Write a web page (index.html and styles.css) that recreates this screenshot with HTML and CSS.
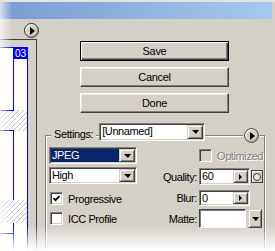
FILE: index.html
```html
<!DOCTYPE html>
<html lang="en">
<head>
    <meta charset="UTF-8">
    <title>Save For Web</title>
    <link rel="stylesheet" href="styles.css">
</head>
<body>

<div class="window">
    <div class="titlebar"></div>

    <div class="body">
        <!-- PREVIEW -->
        <div class="left">
            <div class="left-head"><span class="menu-btn"></span></div>
            <div class="preview">
                <div class="canvas">
                    <div class="band band-a">
                        <div class="cell-l"></div>
                        <div class="cell-r"><span class="slice-num">03</span></div>
                    </div>
                    <div class="band band-b hatch"><div class="cell-h"></div></div>
                    <div class="band band-c"><div class="cell-l"></div></div>
                    <div class="band band-d hatch"></div>
                    <div class="band band-e"><div class="cell-l"></div></div>
                    <div class="band band-f"><div class="cell-l cell-top"></div></div>
                </div>
            </div>
        </div>

        <!-- SETTINGS -->
        <div class="right">
            <div class="buttons">
                <button class="btn btn-default">Save</button>
                <button class="btn">Cancel</button>
                <button class="btn">Done</button>
            </div>

            <div class="group">
                <div class="group-head">
                    <span class="group-label">Settings:</span>
                    <div class="combo combo-settings">
                        <span class="combo-text">[Unnamed]</span>
                        <span class="arrow-btn"><i class="tri-down"></i></span>
                    </div>
                    <span class="menu-btn menu-right"></span>
                </div>

                <div class="group-body">
                    <div class="col-left">
                        <div class="combo combo-small">
                            <span class="combo-text selected">JPEG</span>
                            <span class="arrow-btn"><i class="tri-down"></i></span>
                        </div>
                        <div class="combo combo-small combo-next">
                            <span class="combo-text">High</span>
                            <span class="arrow-btn"><i class="tri-down"></i></span>
                        </div>
                        <label class="check-row check-first">
                            <span class="check">
                                <svg width="7" height="7" viewBox="0 0 7 7"><polyline points="0.5,3 2.5,5.2 6.5,1" fill="none" stroke="#000" stroke-width="1.7"/></svg>
                            </span>
                            Progressive
                        </label>
                        <label class="check-row check-second">
                            <span class="check"></span>
                            ICC Profile
                        </label>
                    </div>

                    <div class="col-right">
                        <div class="row row-opt">
                            <span></span>
                            <label class="check-row disabled">
                                <span class="check"></span>
                                Optimized
                            </label>
                        </div>
                        <div class="row row-quality">
                            <span class="row-label">Quality:</span>
                            <div class="row-field">
                                <div class="num-field">
                                    <span class="num-text">60</span>
                                    <span class="arrow-btn"><i class="tri-right"></i></span>
                                </div>
                                <span class="opt-btn"><i></i></span>
                            </div>
                        </div>
                        <div class="row row-blur">
                            <span class="row-label">Blur:</span>
                            <div class="row-field">
                                <div class="num-field">
                                    <span class="num-text">0</span>
                                    <span class="arrow-btn"><i class="tri-right"></i></span>
                                </div>
                            </div>
                        </div>
                        <div class="row row-matte">
                            <span class="row-label">Matte:</span>
                            <div class="row-field">
                                <div class="matte-box"></div>
                                <span class="arrow-btn matte-btn"><i class="tri-down"></i></span>
                            </div>
                        </div>
                    </div>
                </div>
            </div>
        </div>
    </div>

    <div class="fade"></div>
</div>

</body>
</html>
```

FILE: styles.css
```css
body {
    margin: 0;
    background: #fff;
    font-family: "Liberation Sans", Arial, sans-serif;
    font-size: 11px;
    letter-spacing: -0.4px;
    color: #000;
}
.window {
    position: relative;
    width: 275px;
    height: 251px;
    overflow: hidden;
    background: #d4d0c8;
    border-top: 2px solid #e6e4df;
    box-sizing: border-box;
}
.titlebar {
    height: 17px;
    margin-right: 3px;
    background: linear-gradient(to right, #7a9bcf, #a6c9ef);
}
.body {
    display: flex;
    height: 232px;
}

/* preview strip */
.left {
    width: 37px;
    display: flex;
    flex-direction: column;
}
.left-head {
    height: 20px;
    padding-top: 4px;
    box-sizing: border-box;
    display: flex;
    justify-content: flex-end;
}
.left-head .menu-btn {
    margin-right: -2px;
}
.preview {
    flex: 1;
    border-top: 1px solid #404040;
    border-right: 1px solid #404040;
    padding: 7px 8px 0 0;
}
.canvas {
    height: 100%;
    background: #fff;
    border-top: 1px solid #0000f0;
    border-right: 1px solid #0000f0;
    display: flex;
    flex-direction: column;
}
.band {
    display: flex;
    box-sizing: border-box;
}
.band-a { height: 62px; }
.band-b { height: 21px; }
.band-c { height: 69px; }
.band-d { height: 23px; }
.band-e { height: 10px; }
.band-f { flex: 1; }
.cell-l {
    width: 13px;
    border-right: 1px solid #0000f0;
}
.cell-top {
    border-top: 1px solid #0000f0;
}
.cell-h {
    width: 14px;
    border-top: 1px solid #0000f0;
    border-bottom: 1px solid #0000f0;
    box-sizing: border-box;
}
.cell-r {
    flex: 1;
}
.slice-num {
    display: block;
    height: 11px;
    background: #0000f0;
    color: #fff;
    font-size: 10px;
    line-height: 11px;
    letter-spacing: 0;
    text-align: right;
    padding-right: 1px;
}
.hatch {
    background: repeating-linear-gradient(135deg, #fff 0 2.5px, #c4c4c4 2.5px 3.5px);
}

/* round flyout buttons */
.menu-btn {
    width: 15px;
    height: 15px;
    box-sizing: border-box;
    border-radius: 50%;
    border: 1px solid #303030;
    background: #d4d0c8;
    box-shadow: inset 1px 1px 0 #fff, inset -1px -1px 0 #a0a0a0;
    display: flex;
    align-items: center;
    justify-content: center;
}
.menu-btn::after {
    content: "";
    margin-left: 2px;
    border-left: 5px solid #000;
    border-top: 4px solid transparent;
    border-bottom: 4px solid transparent;
}

/* push buttons */
.right {
    flex: 1;
    padding-top: 22px;
}
.buttons {
    display: flex;
    flex-direction: column;
    gap: 6px;
    margin-left: 43px;
    width: 149px;
}
.btn {
    height: 20px;
    padding: 0;
    font-family: inherit;
    font-size: 11px;
    letter-spacing: -0.3px;
    color: #000;
    background: #d4d0c8;
    border: 1px solid;
    border-color: #fff #404040 #404040 #fff;
    box-shadow: inset -1px -1px 0 #808080, inset 1px 1px 0 #e8e6e2;
}
.btn-default {
    border: 1px solid #000;
    box-shadow: inset 1px 1px 0 #fff, inset -1px -1px 0 #404040, inset -2px -2px 0 #808080;
}

/* settings group */
.group {
    margin: 22px 0 0 8px;
    width: 220px;
    height: 140px;
    box-sizing: border-box;
    border: 1px solid #808080;
    box-shadow: inset 1px 1px 0 #fff, 1px 1px 0 #fff;
}
.group-head {
    display: flex;
    align-items: flex-start;
    height: 19px;
    margin-top: -13px;
    padding-left: 5px;
}
.group-label {
    margin-top: 5px;
    padding: 0 3px;
    line-height: 13px;
    background: #d4d0c8;
}
.menu-right {
    margin: 5px 5px 0 auto;
    outline: 1px solid #d4d0c8;
}

/* combo boxes */
.combo {
    display: flex;
    box-sizing: border-box;
    padding: 1px;
    background: #fff;
    border: 1px solid;
    border-color: #808080 #fff #fff #808080;
    box-shadow: inset 1px 1px 0 #404040, inset -1px -1px 0 #d4d0c8;
}
.combo-settings {
    width: 106px;
    height: 18px;
    margin-left: 3px;
}
.combo-small {
    width: 88px;
    height: 17px;
}
.combo-next {
    margin-top: 3px;
}
.combo-text {
    flex: 1;
    padding-left: 1px;
    line-height: 13px;
    white-space: nowrap;
    overflow: hidden;
}
.combo-text.selected {
    background: #0a246a;
    color: #fff;
}
.arrow-btn {
    width: 16px;
    box-sizing: border-box;
    background: #d4d0c8;
    border: 1px solid;
    border-color: #d4d0c8 #404040 #404040 #d4d0c8;
    box-shadow: inset 1px 1px 0 #fff, inset -1px -1px 0 #808080;
    display: flex;
    align-items: center;
    justify-content: center;
}
.tri-down {
    border-top: 4px solid #000;
    border-left: 4px solid transparent;
    border-right: 3px solid transparent;
}
.tri-right {
    border-left: 3px solid #000;
    border-top: 3px solid transparent;
    border-bottom: 3px solid transparent;
}

.group-body {
    display: flex;
    padding: 5px 0 0 3px;
}
.col-left {
    width: 88px;
}

/* check boxes */
.check-row {
    display: flex;
    align-items: center;
    gap: 5px;
    height: 13px;
    white-space: nowrap;
}
.check-first {
    margin: 8px 0 0 1px;
}
.check-second {
    margin: 7px 0 0 1px;
}
.check {
    width: 13px;
    height: 13px;
    flex: none;
    box-sizing: border-box;
    background: #fff;
    border: 1px solid;
    border-color: #808080 #fff #fff #808080;
    box-shadow: inset 1px 1px 0 #404040, inset -1px -1px 0 #d4d0c8;
    display: flex;
    align-items: center;
    justify-content: center;
}
.disabled {
    color: #808080;
    text-shadow: 1px 1px 0 #fff;
}
.disabled .check {
    background: #d4d0c8;
}

/* right column rows */
.col-right {
    flex: 1;
    padding-right: 1px;
}
.row {
    display: grid;
    grid-template-columns: 1fr 64px;
    align-items: center;
}
.row-opt { margin-top: 2px; height: 13px; }
.row-quality { margin-top: 6px; height: 17px; }
.row-blur { margin-top: 5px; height: 16px; }
.row-matte { margin-top: 3px; height: 19px; }
.row-label {
    text-align: right;
    padding-right: 2px;
}
.row-field {
    display: flex;
    align-items: center;
    height: 100%;
}
.num-field {
    display: flex;
    width: 51px;
    height: 100%;
    box-sizing: border-box;
    padding: 1px;
    background: #fff;
    border: 1px solid;
    border-color: #808080 #fff #fff #808080;
    box-shadow: inset 1px 1px 0 #404040, inset -1px -1px 0 #d4d0c8;
}
.num-text {
    flex: 1;
    padding-left: 1px;
}
.num-field .arrow-btn {
    width: 15px;
}
.opt-btn {
    width: 12px;
    height: 13px;
    margin-left: 1px;
    box-sizing: border-box;
    border: 1px solid #404040;
    background: #d4d0c8;
    box-shadow: inset 1px 1px 0 #fff;
    display: flex;
    align-items: center;
    justify-content: center;
}
.opt-btn i {
    width: 8px;
    height: 8px;
    box-sizing: border-box;
    border-radius: 50%;
    border: 1px solid #404040;
    background: #e6e4e0;
}
.matte-box {
    width: 47px;
    height: 100%;
    box-sizing: border-box;
    background: #fff;
    border: 1px solid;
    border-color: #404040 #fff #fff #404040;
    box-shadow: inset 1px 1px 0 #808080;
}
.matte-btn {
    width: 14px;
    height: 100%;
    margin-left: 2px;
}

/* soft edges of the screenshot */
.fade {
    position: absolute;
    inset: -2px 0 0 0;
    pointer-events: none;
    background:
        linear-gradient(to bottom, rgba(255, 255, 255, 0) 90%, #fff 100%),
        linear-gradient(to right, rgba(255, 255, 255, 0.7), rgba(255, 255, 255, 0) 12px);
}
```
